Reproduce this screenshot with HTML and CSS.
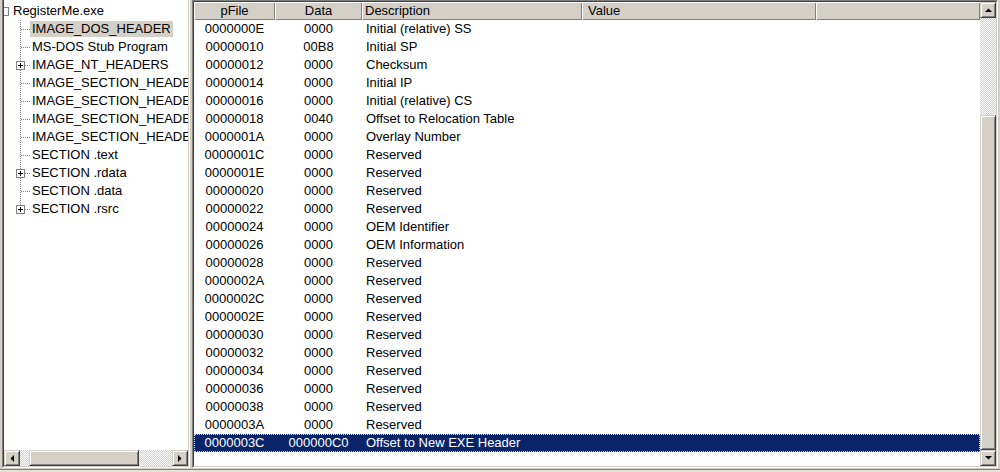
FILE: index.html
```html
<!DOCTYPE html>
<html lang="en">
<head>
    <meta charset="UTF-8">
    <title>RegisterMe.exe - PE Viewer</title>
    <link rel="stylesheet" href="styles.css">
</head>
<body>
    <div class="window">
        <div class="panes">
            <div class="tree-pane">
                <div class="tree-in">
                    <div class="tree">
                        <div class="node root"><span class="box"></span><span class="label">RegisterMe.exe</span></div>
                        <div class="node child"><span class="branch"></span><span class="label selected">IMAGE_DOS_HEADER</span></div>
                        <div class="node child"><span class="branch"></span><span class="label">MS-DOS Stub Program</span></div>
                        <div class="node child"><span class="branch"><span class="box plus"></span></span><span class="label">IMAGE_NT_HEADERS</span></div>
                        <div class="node child"><span class="branch"></span><span class="label">IMAGE_SECTION_HEADER .text</span></div>
                        <div class="node child"><span class="branch"></span><span class="label">IMAGE_SECTION_HEADER .rdata</span></div>
                        <div class="node child"><span class="branch"></span><span class="label">IMAGE_SECTION_HEADER .data</span></div>
                        <div class="node child"><span class="branch"></span><span class="label">IMAGE_SECTION_HEADER .rsrc</span></div>
                        <div class="node child"><span class="branch"></span><span class="label">SECTION .text</span></div>
                        <div class="node child"><span class="branch"><span class="box plus"></span></span><span class="label">SECTION .rdata</span></div>
                        <div class="node child"><span class="branch"></span><span class="label">SECTION .data</span></div>
                        <div class="node child last"><span class="branch"><span class="box plus"></span></span><span class="label">SECTION .rsrc</span></div>
                    </div>
                    <div class="hscroll">
                        <div class="sb-btn"><svg width="4" height="7" viewBox="0 0 4 7"><polygon points="4,0 4,7 0.5,3.5" fill="#000"/></svg></div>
                        <div class="hs-track"><div class="hs-gap"></div><div class="thumb hs-thumb"></div></div>
                        <div class="sb-btn"><svg width="4" height="7" viewBox="0 0 4 7"><polygon points="0,0 0,7 3.5,3.5" fill="#000"/></svg></div>
                    </div>
                </div>
            </div>

            <div class="splitter"></div>

            <div class="list-pane">
                <div class="list-in">
                    <div class="list">
                        <div class="list-head">
                            <div class="hcell center">pFile</div>
                            <div class="hcell center">Data</div>
                            <div class="hcell desc">Description</div>
                            <div class="hcell value">Value</div>
                            <div class="hcell"></div>
                        </div>
                        <div class="row"><span>0000000E</span><span>0000</span><span>Initial (relative) SS</span></div>
                        <div class="row"><span>00000010</span><span>00B8</span><span>Initial SP</span></div>
                        <div class="row"><span>00000012</span><span>0000</span><span>Checksum</span></div>
                        <div class="row"><span>00000014</span><span>0000</span><span>Initial IP</span></div>
                        <div class="row"><span>00000016</span><span>0000</span><span>Initial (relative) CS</span></div>
                        <div class="row"><span>00000018</span><span>0040</span><span>Offset to Relocation Table</span></div>
                        <div class="row"><span>0000001A</span><span>0000</span><span>Overlay Number</span></div>
                        <div class="row"><span>0000001C</span><span>0000</span><span>Reserved</span></div>
                        <div class="row"><span>0000001E</span><span>0000</span><span>Reserved</span></div>
                        <div class="row"><span>00000020</span><span>0000</span><span>Reserved</span></div>
                        <div class="row"><span>00000022</span><span>0000</span><span>Reserved</span></div>
                        <div class="row"><span>00000024</span><span>0000</span><span>OEM Identifier</span></div>
                        <div class="row"><span>00000026</span><span>0000</span><span>OEM Information</span></div>
                        <div class="row"><span>00000028</span><span>0000</span><span>Reserved</span></div>
                        <div class="row"><span>0000002A</span><span>0000</span><span>Reserved</span></div>
                        <div class="row"><span>0000002C</span><span>0000</span><span>Reserved</span></div>
                        <div class="row"><span>0000002E</span><span>0000</span><span>Reserved</span></div>
                        <div class="row"><span>00000030</span><span>0000</span><span>Reserved</span></div>
                        <div class="row"><span>00000032</span><span>0000</span><span>Reserved</span></div>
                        <div class="row"><span>00000034</span><span>0000</span><span>Reserved</span></div>
                        <div class="row"><span>00000036</span><span>0000</span><span>Reserved</span></div>
                        <div class="row"><span>00000038</span><span>0000</span><span>Reserved</span></div>
                        <div class="row"><span>0000003A</span><span>0000</span><span>Reserved</span></div>
                        <div class="row selected"><span>0000003C</span><span>000000C0</span><span>Offset to New EXE Header</span></div>
                    </div>
                    <div class="vscroll">
                        <div class="sb-btn"><svg width="7" height="4" viewBox="0 0 7 4"><polygon points="0,4 7,4 3.5,0.5" fill="#000"/></svg></div>
                        <div class="vs-track"><div class="vs-gap"></div><div class="thumb vs-thumb"></div></div>
                        <div class="sb-btn"><svg width="7" height="4" viewBox="0 0 7 4"><polygon points="0,0 7,0 3.5,3.5" fill="#000"/></svg></div>
                    </div>
                </div>
            </div>
        </div>
        <div class="status"></div>
    </div>
</body>
</html>
```

FILE: styles.css
```css
body {
    margin: 0;
    background-color: #d4d0c8;
    font-family: "Liberation Sans", Arial, sans-serif;
    font-size: 13px;
    color: #000;
}
.window {
    width: 1000px;
    height: 472px;
    display: flex;
    flex-direction: column;
    overflow: hidden;
}
.panes {
    height: 468px;
    display: flex;
    padding: 0 2px;
}

/* sunken frames */
.tree-pane {
    width: 186px;
    border-left: 1px solid #808080;
    border-right: 1px solid #fff;
    border-bottom: 1px solid #fff;
}
.tree-in {
    height: 100%;
    box-sizing: border-box;
    border-left: 1px solid #404040;
    border-right: 1px solid #d4d0c8;
    border-bottom: 1px solid #d4d0c8;
    padding-top: 2px;
    background: #fff;
    display: flex;
    flex-direction: column;
    overflow: hidden;
}
.splitter {
    width: 2px;
}
.list-pane {
    width: 804px;
    border-top: 1px solid #808080;
    border-left: 1px solid #808080;
    border-right: 1px solid #fff;
    border-bottom: 1px solid #fff;
}
.list-in {
    height: 100%;
    box-sizing: border-box;
    border-top: 1px solid #404040;
    border-left: 1px solid #404040;
    border-right: 1px solid #d4d0c8;
    border-bottom: 1px solid #d4d0c8;
    background: #fff;
    display: flex;
}

/* tree */
.tree {
    flex: 1;
    overflow: hidden;
}
.node {
    height: 18px;
    display: flex;
    align-items: center;
    white-space: nowrap;
}
.node .label {
    padding: 0 2px;
    line-height: 16px;
    height: 16px;
    min-width: 0;
    overflow: hidden;
}
.node .label.selected {
    background: #d4d0c8;
}
.root .box {
    margin-left: -4px;
}
.root .label {
    margin-left: 2px;
}
.child {
    padding-left: 12px;
}
.branch {
    width: 14px;
    height: 18px;
    flex-shrink: 0;
    display: flex;
    align-items: center;
    background:
        repeating-linear-gradient(#808080 0 1px, transparent 1px 2px) 4px 0 / 1px 100% no-repeat,
        repeating-linear-gradient(to right, #808080 0 1px, transparent 1px 2px) 5px 9px / 10px 1px no-repeat;
}
.last .branch {
    background:
        repeating-linear-gradient(#808080 0 1px, transparent 1px 2px) 4px 0 / 1px 9px no-repeat,
        repeating-linear-gradient(to right, #808080 0 1px, transparent 1px 2px) 5px 9px / 10px 1px no-repeat;
}
.box {
    width: 9px;
    height: 9px;
    box-sizing: border-box;
    border: 1px solid #808080;
    background: #fff;
    flex-shrink: 0;
}
.box.plus {
    background:
        linear-gradient(#000, #000) center / 5px 1px no-repeat,
        linear-gradient(#000, #000) center / 1px 5px no-repeat,
        #fff;
}

/* scrollbars */
.sb-btn {
    width: 16px;
    height: 16px;
    box-sizing: border-box;
    background: #d4d0c8;
    border: 1px solid;
    border-color: #d4d0c8 #404040 #404040 #d4d0c8;
    box-shadow: inset 1px 1px 0 #fff, inset -1px -1px 0 #808080;
    display: flex;
    align-items: center;
    justify-content: center;
    flex-shrink: 0;
}
.sb-btn svg {
    display: block;
}
.thumb {
    box-sizing: border-box;
    background: #d4d0c8;
    border: 1px solid;
    border-color: #d4d0c8 #404040 #404040 #d4d0c8;
    box-shadow: inset 1px 1px 0 #fff, inset -1px -1px 0 #808080;
}
.hscroll {
    height: 16px;
    display: flex;
}
.hs-track,
.vs-track {
    flex: 1;
    display: flex;
    background: repeating-conic-gradient(#d4d0c8 0 25%, #fff 0 50%) 0 0 / 2px 2px;
}
.hs-gap {
    width: 9px;
}
.hs-thumb {
    width: 110px;
}
.vscroll {
    width: 16px;
    display: flex;
    flex-direction: column;
}
.vs-track {
    flex-direction: column;
}
.vs-gap {
    height: 97px;
}
.vs-thumb {
    height: 335px;
}

/* list view */
.list {
    flex: 1;
    overflow: hidden;
}
.list-head,
.row {
    display: grid;
    grid-template-columns: 81px 87px 220px 234px 1fr;
    height: 18px;
    line-height: 18px;
    white-space: nowrap;
}
.hcell {
    background: #d4d0c8;
    box-shadow: inset 1px 1px 0 #fff, inset -1px -1px 0 #808080;
    overflow: hidden;
}
.hcell.center {
    text-align: center;
}
.hcell.desc {
    padding-left: 3px;
}
.hcell.value {
    padding-left: 6px;
}
.row span:nth-child(1),
.row span:nth-child(2) {
    text-align: center;
}
.row span:nth-child(3) {
    padding-left: 4px;
}
.row.selected {
    background: #0a246a;
    color: #fff;
    outline: 1px dotted #e8d8a0;
    outline-offset: -1px;
}

.status {
    height: 2px;
    margin-top: 1px;
    border-top: 1px solid #808080;
    background: #e4e1da;
}
```
